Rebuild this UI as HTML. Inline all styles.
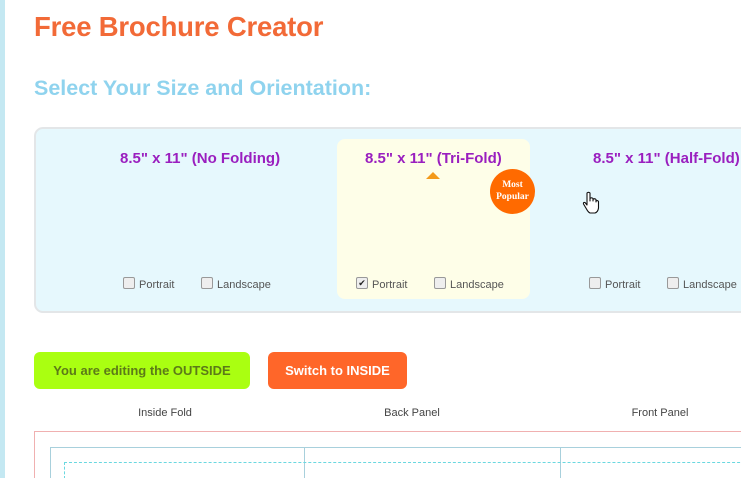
<!DOCTYPE html>
<html style="overflow:hidden;height:478px"><head><style>
body{margin:0;width:741px;height:478px;overflow:hidden;background:#fff;font-family:"Liberation Sans",sans-serif;position:relative}
.a{position:absolute}
.h{color:#9a1fbf;font-size:15px;font-weight:bold;white-space:nowrap}
.cb{position:absolute;font-size:11px;color:#555;white-space:nowrap;line-height:12px}
.cb i{display:inline-block;position:relative;top:1px;width:10px;height:10px;border:1px solid #999;border-radius:2px;background:#eee;margin-right:4px;font-style:normal;font-size:9px;line-height:10px;text-align:center;color:#222;overflow:hidden}
.lbl{position:absolute;top:407px;font-size:11px;color:#444;width:200px;text-align:center}
</style></head><body>
<div class="a" style="left:0;top:0;width:5px;height:478px;background:#c4e8f2"></div>
<div class="a" style="left:34px;top:11px;font-size:27.5px;color:#f26a37;font-weight:bold;letter-spacing:-0.2px">Free Brochure Creator</div>
<div class="a" style="left:34px;top:76px;font-size:21.5px;color:#8fd3ee;font-weight:bold">Select Your Size and Orientation:</div>
<div class="a" style="left:34px;top:127px;width:740px;height:182px;border:2px solid #e3e6e8;border-radius:9px;background:#e6f8fd"></div>
<div class="a" style="left:337px;top:139px;width:193px;height:160px;border-radius:8px;background:#fefee8"></div>
<div class="a h" style="left:120px;top:150px">8.5" x 11" (No Folding)</div>
<div class="a h" style="left:365px;top:150px">8.5" x 11" (Tri-Fold)</div>
<div class="a h" style="left:593px;top:150px">8.5" x 11" (Half-Fold)</div>
<div class="a" style="left:426px;top:172px;width:0;height:0;border-left:7px solid transparent;border-right:7px solid transparent;border-bottom:7px solid #f39a1a"></div>
<div class="a" style="left:490px;top:169px;width:45px;height:45px;border-radius:50%;background:#ff6a00;color:#fff;font-family:'Liberation Serif',serif;font-weight:bold;font-size:9.5px;text-align:center;line-height:12px;padding-top:10px;box-sizing:border-box">Most<br>Popular</div>
<svg class="a" style="left:582px;top:191px" width="18" height="24" viewBox="0 0 18 24"><path d="M5 2 Q6.5 0.5 8 2 L8 10 L8 7.5 Q9.5 6 11 7.5 L11 10 L11 8.5 Q12.5 7 14 8.5 L14 11 L14 10 Q15.5 9 16.5 10.5 L16.5 17 Q16 21 13 22 L8 22 Q6 21 4.5 18 L1.5 13 Q1 11 3 11.5 L5 14 Z" fill="#fff" stroke="#111" stroke-width="1.1" stroke-linejoin="round"/></svg>
<div class="cb" style="left:123px;top:276px"><i></i>Portrait</div>
<div class="cb" style="left:201px;top:276px"><i></i>Landscape</div>
<div class="cb" style="left:356px;top:276px"><i>✔</i>Portrait</div>
<div class="cb" style="left:434px;top:276px"><i></i>Landscape</div>
<div class="cb" style="left:589px;top:276px"><i></i>Portrait</div>
<div class="cb" style="left:667px;top:276px"><i></i>Landscape</div>
<div class="a" style="left:34px;top:352px;width:216px;height:37px;border-radius:6px;background:#aaff11;color:#5c7a18;font-size:13px;font-weight:bold;line-height:37px;text-align:center">You are editing the OUTSIDE</div>
<div class="a" style="left:268px;top:352px;width:139px;height:37px;border-radius:6px;background:#ff6629;color:#fff;font-size:13px;font-weight:bold;line-height:37px;text-align:center">Switch to INSIDE</div>
<div class="lbl" style="left:65px">Inside Fold</div>
<div class="lbl" style="left:312px">Back Panel</div>
<div class="lbl" style="left:560px">Front Panel</div>
<div class="a" style="left:34px;top:431px;width:720px;height:47px;border-left:1px solid #f0b0b0;border-top:1px solid #f0b0b0"></div>
<div class="a" style="left:50px;top:447px;width:700px;height:31px;border-left:1px solid #a8d0dc;border-top:1px solid #a8d0dc"></div>
<div class="a" style="left:304px;top:447px;width:1px;height:31px;background:#a8d0dc"></div>
<div class="a" style="left:560px;top:447px;width:1px;height:31px;background:#a8d0dc"></div>
<div class="a" style="left:64px;top:462px;width:700px;height:16px;border-left:1px dashed #6ad8e0;border-top:1px dashed #6ad8e0"></div>
</body></html>
